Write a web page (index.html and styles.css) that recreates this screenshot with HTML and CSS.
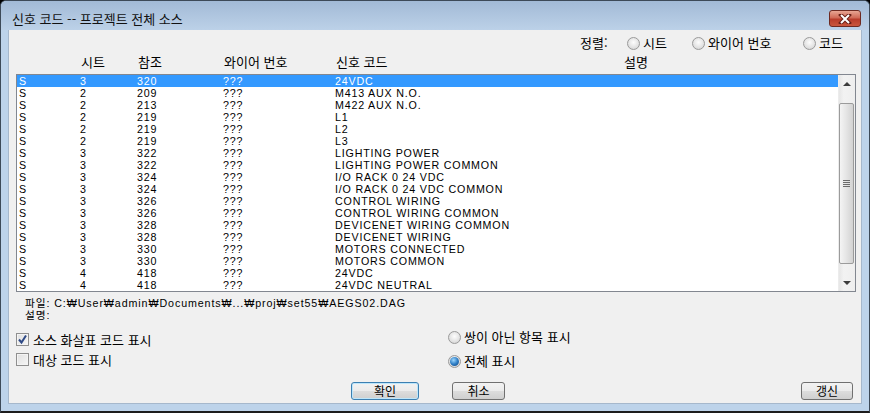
FILE: index.html
```html
<!DOCTYPE html>
<html lang="ko">
  <head>
    <meta charset="UTF-8" />
    <title>신호 코드 -- 프로젝트 전체 소스</title>
    <link rel="stylesheet" href="styles.css">
  </head>
  <body>
    <div class="window">
      <div class="titlebar">
        <span class="title">신호 코드 -- 프로젝트 전체 소스</span>
        <div class="close-btn">
          <svg width="14" height="10" viewBox="0 0 14 10">
            <path d="M3 1 L11 9 M11 1 L3 9" stroke="#6a2018" stroke-width="4" stroke-linecap="square" />
            <path d="M3 1 L11 9 M11 1 L3 9" stroke="#fff" stroke-width="2" />
          </svg>
        </div>
      </div>

      <div class="client">
        <!-- sort options -->
        <div class="sort-row">
          <span class="sort-label">정렬:</span>
          <label class="radio sort-sheet"><span class="radio-dot"></span>시트</label>
          <label class="radio sort-wire"><span class="radio-dot"></span>와이어 번호</label>
          <label class="radio"><span class="radio-dot"></span>코드</label>
        </div>

        <!-- column headers -->
        <div class="list-head cols">
          <span></span>
          <span>시트</span>
          <span>참조</span>
          <span>와이어 번호</span>
          <span>신호 코드</span>
          <span>설명</span>
        </div>

        <!-- list -->
        <div class="listbox">
          <div class="rows">
            <div class="row cols selected"><span>S</span><span>3</span><span>320</span><span>???</span><span>24VDC</span><span></span></div>
            <div class="row cols"><span>S</span><span>2</span><span>209</span><span>???</span><span>M413 AUX N.O.</span><span></span></div>
            <div class="row cols"><span>S</span><span>2</span><span>213</span><span>???</span><span>M422 AUX N.O.</span><span></span></div>
            <div class="row cols"><span>S</span><span>2</span><span>219</span><span>???</span><span>L1</span><span></span></div>
            <div class="row cols"><span>S</span><span>2</span><span>219</span><span>???</span><span>L2</span><span></span></div>
            <div class="row cols"><span>S</span><span>2</span><span>219</span><span>???</span><span>L3</span><span></span></div>
            <div class="row cols"><span>S</span><span>3</span><span>322</span><span>???</span><span>LIGHTING POWER</span><span></span></div>
            <div class="row cols"><span>S</span><span>3</span><span>322</span><span>???</span><span>LIGHTING POWER COMMON</span><span></span></div>
            <div class="row cols"><span>S</span><span>3</span><span>324</span><span>???</span><span>I/O RACK 0 24 VDC</span><span></span></div>
            <div class="row cols"><span>S</span><span>3</span><span>324</span><span>???</span><span>I/O RACK 0 24 VDC COMMON</span><span></span></div>
            <div class="row cols"><span>S</span><span>3</span><span>326</span><span>???</span><span>CONTROL WIRING</span><span></span></div>
            <div class="row cols"><span>S</span><span>3</span><span>326</span><span>???</span><span>CONTROL WIRING COMMON</span><span></span></div>
            <div class="row cols"><span>S</span><span>3</span><span>328</span><span>???</span><span>DEVICENET WIRING COMMON</span><span></span></div>
            <div class="row cols"><span>S</span><span>3</span><span>328</span><span>???</span><span>DEVICENET WIRING</span><span></span></div>
            <div class="row cols"><span>S</span><span>3</span><span>330</span><span>???</span><span>MOTORS CONNECTED</span><span></span></div>
            <div class="row cols"><span>S</span><span>3</span><span>330</span><span>???</span><span>MOTORS COMMON</span><span></span></div>
            <div class="row cols"><span>S</span><span>4</span><span>418</span><span>???</span><span>24VDC</span><span></span></div>
            <div class="row cols"><span>S</span><span>4</span><span>418</span><span>???</span><span>24VDC NEUTRAL</span><span></span></div>
          </div>
          <div class="scrollbar">
            <div class="sb-arrow"><span class="tri-up"></span></div>
            <div class="sb-track">
              <div class="sb-thumb"><span class="grip"></span></div>
            </div>
            <div class="sb-arrow"><span class="tri-down"></span></div>
          </div>
        </div>

        <!-- file info -->
        <div class="file-info">
          <div>파일: C:₩User₩admin₩Documents₩...₩proj₩set55₩AEGS02.DAG</div>
          <div>설명:</div>
        </div>

        <!-- options -->
        <div class="options">
          <div class="checks">
            <label class="check"><span class="check-box">
              <svg width="11" height="11" viewBox="0 0 11 11"><path d="M2 5.5 L4.5 8.5 L9 1.5" fill="none" stroke="#2f4a86" stroke-width="2" /></svg>
            </span>소스 화살표 코드 표시</label>
            <label class="check"><span class="check-box"></span>대상 코드 표시</label>
          </div>
          <div class="filters">
            <label class="radio"><span class="radio-dot"></span>쌍이 아닌 항목 표시</label>
            <label class="radio"><span class="radio-dot on"></span>전체 표시</label>
          </div>
        </div>

        <!-- buttons -->
        <div class="buttons">
          <button class="btn btn-default btn-ok">확인</button>
          <button class="btn btn-cancel">취소</button>
          <button class="btn btn-refresh">갱신</button>
        </div>
      </div>
    </div>
  </body>
</html>
```

FILE: styles.css
```css
* {
  margin: 0;
  padding: 0;
  box-sizing: border-box;
}

body {
  width: 870px;
  height: 413px;
  overflow: hidden;
  background: #000;
  font-family: "Noto Sans CJK KR", "Liberation Sans", sans-serif;
  font-size: 13px;
  color: #000;
}

.window {
  width: 870px;
  height: 413px;
  background: #bdd3ea;
  border: 1px solid #3d4a58;
  border-bottom: 2px solid #1c1c1c;
  border-radius: 6px 6px 0 0;
  display: flex;
  flex-direction: column;
}

/* title bar */
.titlebar {
  height: 29px;
  display: flex;
  align-items: flex-start;
  padding: 9px 8px 0 11px;
  background: linear-gradient(#a2bad6, #bcd1e8);
  border-radius: 5px 5px 0 0;
}

.title {
  line-height: 17px;
  font-size: 13px;
  color: #111;
}

.close-btn {
  margin-left: auto;
  width: 32px;
  height: 17px;
  border: 1px solid #6e2a22;
  border-radius: 3px;
  background: linear-gradient(#e8a593, #d06a57 45%, #b93c2b 55%, #c9573e);
  display: flex;
  align-items: center;
  justify-content: center;
}

/* client area */
.client {
  margin: 0 7px;
  height: 374px;
  background: #f0f0f0;
  border-left: 1px solid #a6b8cc;
  border-right: 1px solid #a6b8cc;
  border-bottom: 1px solid #a6b8cc;
}

.radio {
  display: flex;
  align-items: center;
  height: 14px;
  line-height: 14px;
}

.radio-dot {
  width: 13px;
  height: 13px;
  border-radius: 50%;
  border: 1px solid #9a9a9a;
  background: radial-gradient(circle at 50% 40%, #fdfdfd, #e2e2e2 60%, #cbcbcb);
  margin-right: 3px;
  position: relative;
}

.radio-dot.on::after {
  content: "";
  position: absolute;
  left: 1px;
  top: 1px;
  width: 9px;
  height: 9px;
  border-radius: 50%;
  background: radial-gradient(circle at 40% 35%, #9fd8ff, #2f7fc6 50%, #0e3f7a);
}

.sort-row {
  display: flex;
  margin-top: 6px;
  padding-left: 571px;
  height: 14px;
  line-height: 14px;
}

.sort-label {
  width: 47px;
}

.sort-sheet {
  width: 65px;
}

.sort-wire {
  width: 111px;
}

/* columns shared by header and rows */
.cols {
  display: grid;
  grid-template-columns: 61px 57px 86px 112px 288px 1fr;
  padding-left: 2px;
  white-space: nowrap;
}

.list-head {
  margin: 6px 0 0 9px;
  height: 12px;
  line-height: 12px;
}

.listbox {
  margin: 6px 0 0 7px;
  width: 840px;
  height: 218px;
  border: 1px solid #828790;
  background: #fff;
  display: flex;
}

.rows {
  flex: 1;
  overflow: hidden;
}

.row {
  height: 12px;
  line-height: 12px;
  font-family: "Liberation Sans", sans-serif;
  font-size: 10.7px;
  letter-spacing: 0.8px;
}

.row.selected {
  background: #3399ff;
  color: #fff;
}

/* scrollbar */
.scrollbar {
  width: 17px;
  display: flex;
  flex-direction: column;
  background: linear-gradient(90deg, #e6e6e6, #f2f2f2 30%, #eeeeee);
  border-left: 1px solid #ececec;
}

.sb-arrow {
  height: 17px;
  display: flex;
  align-items: center;
  justify-content: center;
}

.tri-up {
  border-left: 4px solid transparent;
  border-right: 4px solid transparent;
  border-bottom: 4px solid #3c3c3c;
}

.tri-down {
  border-left: 4px solid transparent;
  border-right: 4px solid transparent;
  border-top: 4px solid #3c3c3c;
}

.sb-track {
  flex: 1;
  padding: 11px 1px 0 0;
}

.sb-thumb {
  height: 161px;
  border: 1px solid #9b9b9b;
  border-radius: 2px;
  background: linear-gradient(90deg, #f4f4f4, #e6e6e6 45%, #d2d2d2);
  display: flex;
  align-items: center;
  justify-content: center;
}

.grip {
  width: 7px;
  height: 7px;
  background: repeating-linear-gradient(#6c6c6c 0 1px, transparent 1px 2px);
}

/* file info */
.file-info {
  margin-top: 5px;
  padding-left: 16px;
  font-family: "Liberation Sans", "Noto Sans CJK KR", sans-serif;
  font-size: 10.7px;
  letter-spacing: 0.9px;
  line-height: 12px;
}

/* options */
.options {
  display: flex;
  margin-top: 8px;
  padding-left: 7px;
}

.checks {
  width: 432px;
}

.check {
  display: flex;
  align-items: center;
  height: 20px;
}

.check-box {
  width: 13px;
  height: 13px;
  border: 1px solid #8f8f8f;
  background: linear-gradient(135deg, #e0e0e0, #f6f6f6);
  box-shadow: inset 0 0 0 1px #f4f4f4;
  margin-right: 4px;
  display: flex;
  align-items: center;
  justify-content: center;
}

.filters {
  margin-top: -4px;
}

.filters .radio {
  height: 24px;
}

/* buttons */
.buttons {
  display: flex;
  margin-top: 9px;
  padding: 0 8px 0 342px;
}

.btn {
  height: 18px;
  font-family: "Noto Sans CJK KR", sans-serif;
  font-size: 12px;
  line-height: 14px;
  border: 1px solid #707070;
  border-radius: 3px;
  background: linear-gradient(#f2f2f2, #ebebeb 50%, #dddddd 50%, #cfcfcf);
  color: #000;
}

.btn-default {
  border-color: #3c7fb1;
  box-shadow: inset 0 0 0 1px #bde6fb;
}

.btn-ok {
  width: 68px;
}

.btn-cancel {
  width: 53px;
  margin-left: 33px;
}

.btn-refresh {
  width: 52px;
  margin-left: auto;
}
```
